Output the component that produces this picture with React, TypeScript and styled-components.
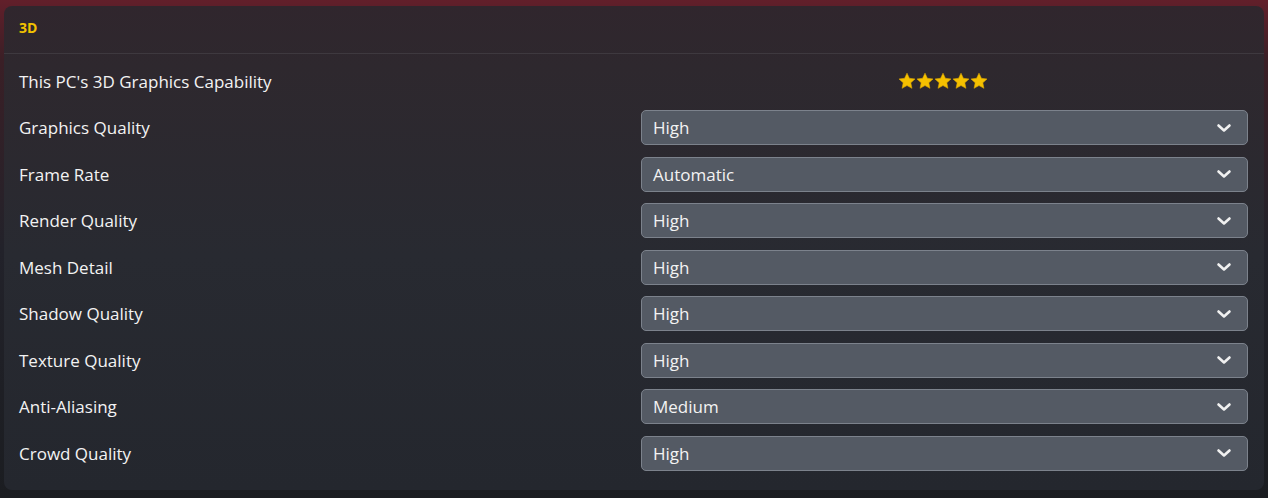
import React from "react";
import styled, { createGlobalStyle } from "styled-components";

const Global = createGlobalStyle`
  html, body { margin: 0; padding: 0; }
  body {
    width: 1268px;
    height: 498px;
    overflow: hidden;
    font-family: "Open Sans", "Lato", sans-serif;
    background: linear-gradient(180deg, #621f2a 0px, #3a1f26 60px, #22222a 250px, #1b1d21 498px);
  }
`;

const Page = styled.div`
  box-sizing: border-box;
  width: 1268px;
  height: 498px;
  padding: 6px 4px 8px 4px;
`;

const Panel = styled.section`
  height: 484px;
  border-radius: 8px;
  background: linear-gradient(180deg, #30262d 0px, #2e282e 60px, #282a31 250px, #24272e 484px);
  display: flex;
  flex-direction: column;
  overflow: hidden;
`;

const Header = styled.header`
  box-sizing: border-box;
  height: 48px;
  padding: 0 15px 4px 15px;
  display: flex;
  align-items: center;
  border-bottom: 1px solid #3e393f;
  color: #f2c200;
  font-weight: 700;
  font-size: 14px;
`;

const Body = styled.div`
  padding: 4px 15px 0 15px;
  display: flex;
  flex-direction: column;
`;

const Row = styled.div`
  height: 46.5px;
  display: grid;
  grid-template-columns: 622px 607px;
  align-items: center;
`;

const Label = styled.div`
  color: #f3f3f3;
  font-size: 17px;
`;

const Stars = styled.div`
  display: flex;
  justify-content: center;
  gap: 0;
  padding-right: 3px;
`;

const Select = styled.div`
  box-sizing: border-box;
  height: 35px;
  border: 1px solid #7c828c;
  border-radius: 5px;
  background: #545a64;
  display: flex;
  align-items: center;
  justify-content: space-between;
  padding: 0 15px 0 11px;
  color: #f3f3f3;
  font-size: 17px;
`;

const Star = () => (
  <svg width="18" height="18" viewBox="0 0 24 24">
    <path
      d="M12 1.5l3.2 6.9 7.5.9-5.6 5.1 1.5 7.4L12 18.1l-6.6 3.7 1.5-7.4-5.6-5.1 7.5-.9z"
      fill="#f5c000"
      stroke="#d9a400"
      strokeWidth="0.8"
      strokeLinejoin="round"
    />
  </svg>
);

const Chevron = () => (
  <svg width="16" height="10" viewBox="0 0 16 10">
    <path d="M2.5 2.5l5.5 5 5.5-5" stroke="#f0f0f0" strokeWidth="2.6" fill="none" strokeLinecap="round" strokeLinejoin="round" />
  </svg>
);

const settings: [string, string][] = [
  ["Graphics Quality", "High"],
  ["Frame Rate", "Automatic"],
  ["Render Quality", "High"],
  ["Mesh Detail", "High"],
  ["Shadow Quality", "High"],
  ["Texture Quality", "High"],
  ["Anti-Aliasing", "Medium"],
  ["Crowd Quality", "High"],
];

export default function App() {
  return (
    <>
      <Global />
      <Page>
        <Panel>
          <Header>3D</Header>
          <Body>
            <Row>
              <Label>This PC's 3D Graphics Capability</Label>
              <Stars>
                {[0, 1, 2, 3, 4].map((i) => (
                  <Star key={i} />
                ))}
              </Stars>
            </Row>
            {settings.map(([label, value]) => (
              <Row key={label}>
                <Label>{label}</Label>
                <Select>
                  <span>{value}</span>
                  <Chevron />
                </Select>
              </Row>
            ))}
          </Body>
        </Panel>
      </Page>
    </>
  );
}
